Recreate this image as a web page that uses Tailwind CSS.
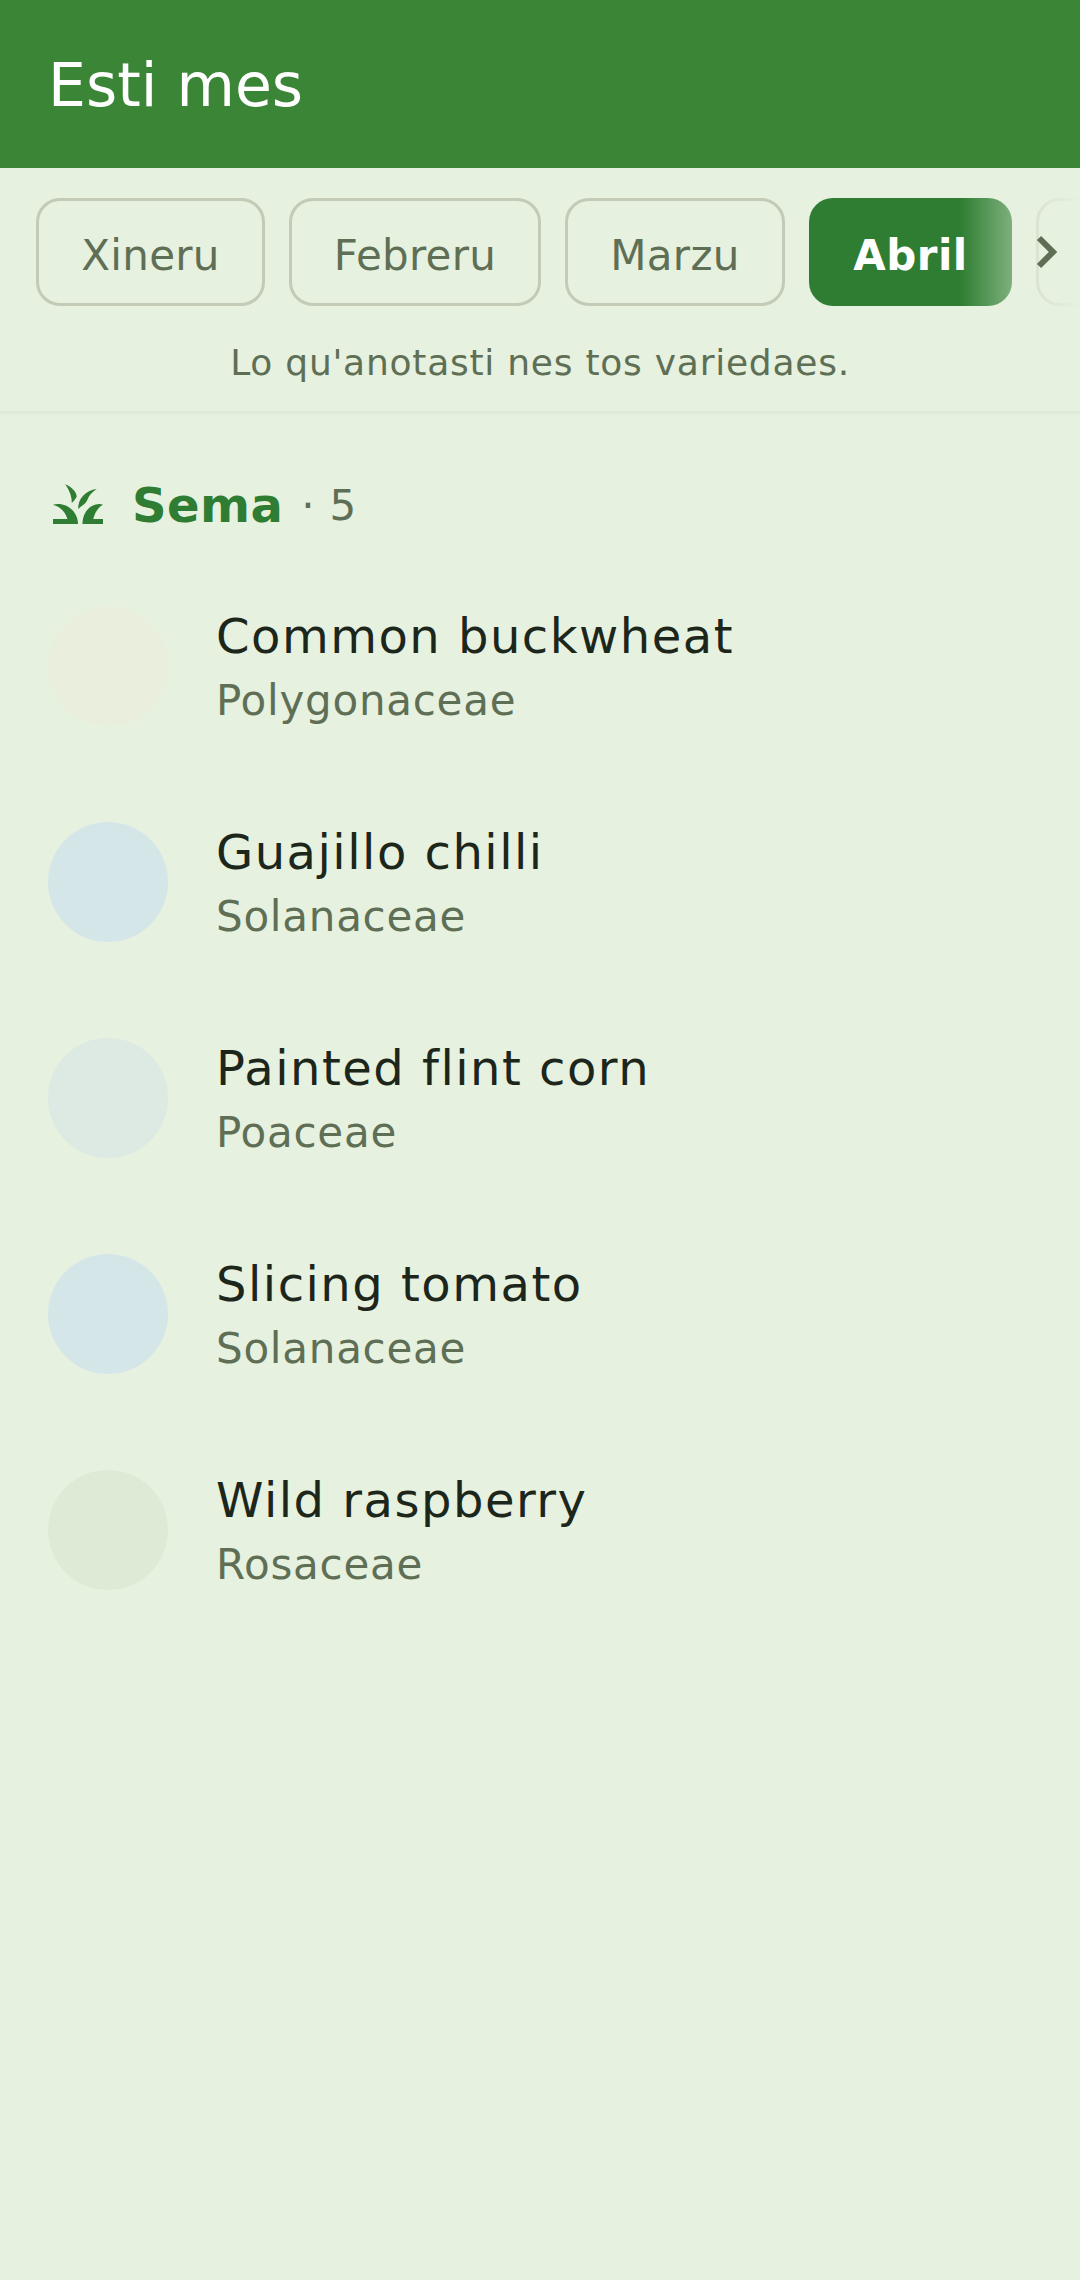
<!DOCTYPE html>
<html lang="ast">
<head>
  <meta charset="UTF-8">
  <meta name="viewport" content="width=device-width, initial-scale=1.0">
  <title>Esti mes</title>
  <script src="https://cdn.jsdelivr.net/npm/@tailwindcss/browser@4"></script>
</head>
<body class="bg-[#e6f1df] font-['DejaVu_Sans',sans-serif] w-[1080px] h-[2280px] overflow-hidden">
  <header class="bg-[#3b8636] h-[168px] flex items-center pl-12 pt-[2px]">
    <h1 class="text-white text-[60px] leading-none font-normal">Esti mes</h1>
  </header>

  <section class="relative">
    <div class="flex gap-[24px] pl-9 pt-[30px] overflow-hidden">
      <button class="shrink-0 w-[229px] h-[108px] pt-[7px] border-[3px] border-[#c3cab5] rounded-[24px] text-[42px] tracking-[0.3px] text-[#5f6f55]">Xineru</button>
      <button class="shrink-0 w-[252px] h-[108px] pt-[7px] border-[3px] border-[#c3cab5] rounded-[24px] text-[42px] tracking-[0.3px] text-[#5f6f55]">Febreru</button>
      <button class="shrink-0 w-[220px] h-[108px] pt-[7px] border-[3px] border-[#c3cab5] rounded-[24px] text-[42px] tracking-[0.3px] text-[#5f6f55]">Marzu</button>
      <button class="shrink-0 w-[203px] h-[108px] pt-[7px] bg-[#2e7d32] rounded-[24px] text-[42px] tracking-[0.45px] font-bold text-white">Abril</button>
      <button class="shrink-0 w-[200px] h-[108px] pt-[7px] pl-[48px] text-left border-[3px] border-[#c3cab5] rounded-[24px] text-[42px] tracking-[0.3px] text-[#5f6f55]">Mayu</button>
    </div>
    <div class="absolute right-0 top-[30px] w-[120px] h-[108px] bg-gradient-to-r from-[#e6f1df]/0 to-[#e6f1df]"></div>
    <svg class="absolute left-[1034px] top-[66px] w-6 h-9" viewBox="0 0 24 36" fill="none" stroke="#5f6f55" stroke-width="6">
      <path d="M5 4 L19 18 L5 32"/>
    </svg>
    <p class="text-center text-[36px] tracking-[0.75px] leading-none text-[#5f6f55] pt-[39px] pb-[30px] border-b-[3px] border-[#e0eada]">Lo qu'anotasti nes tos variedaes.</p>
  </section>

  <main class="pt-[60px]">
    <div class="flex items-center pl-[48px] h-[62px]">
      <svg class="w-[60px] h-[60px] mb-[2px]" viewBox="0 0 24 24" fill="#2e7d32">
        <path d="M12 20H2v-2h5.75C7 15.2 4.8 13 2 12.26 2.64 12.1 3.3 12 4 12c4.42 0 8 3.58 8 8z"/>
        <path d="M13.8 20H22v-2h-3.9C18.8 15.2 20 13.5 22 12.3 21.5 12.1 21 12 20.5 12 16.5 12.2 13.8 15.6 13.8 20z"/>
        <path d="M6.8 4.1C9.5 5 11.4 7.3 11.5 9 11 10 10.5 10.7 9.5 11.6 9.6 9 8.5 6.3 6.8 4.1z"/>
        <path d="M19.5 6C15 6.5 11.9 10 12.1 14 13.6 12.4 15.2 12 15.8 10.2 16.4 8.6 17.8 7 19.5 6z"/>
      </svg>
      <div class="flex items-baseline ml-[24px]">
        <span class="text-[48px] tracking-[0.45px] font-bold text-[#2e7d32] leading-none">Sema</span>
        <span class="ml-[18px] text-[42px] tracking-[0.75px] text-[#5f6f55] leading-none -translate-y-[2px]">· 5</span>
      </div>
    </div>

    <ul class="mt-[22px]">
      <li class="flex items-center pl-[48px] h-[216px]">
        <div class="w-[120px] h-[120px] rounded-full bg-[#e9efdc]"></div>
        <div class="ml-[48px]">
          <div class="text-[48px] tracking-[1.5px] leading-[70px] text-[#1c261a]">Common buckwheat</div>
          <div class="text-[42px] tracking-[0.75px] leading-[60px] text-[#5f6f55]">Polygonaceae</div>
        </div>
      </li>
      <li class="flex items-center pl-[48px] h-[216px]">
        <div class="w-[120px] h-[120px] rounded-full bg-[#d5e6e8]"></div>
        <div class="ml-[48px]">
          <div class="text-[48px] tracking-[1.5px] leading-[70px] text-[#1c261a]">Guajillo chilli</div>
          <div class="text-[42px] tracking-[0.75px] leading-[60px] text-[#5f6f55]">Solanaceae</div>
        </div>
      </li>
      <li class="flex items-center pl-[48px] h-[216px]">
        <div class="w-[120px] h-[120px] rounded-full bg-[#dde9e3]"></div>
        <div class="ml-[48px]">
          <div class="text-[48px] tracking-[1.5px] leading-[70px] text-[#1c261a]">Painted flint corn</div>
          <div class="text-[42px] tracking-[0.75px] leading-[60px] text-[#5f6f55]">Poaceae</div>
        </div>
      </li>
      <li class="flex items-center pl-[48px] h-[216px]">
        <div class="w-[120px] h-[120px] rounded-full bg-[#d5e6e8]"></div>
        <div class="ml-[48px]">
          <div class="text-[48px] tracking-[1.5px] leading-[70px] text-[#1c261a]">Slicing tomato</div>
          <div class="text-[42px] tracking-[0.75px] leading-[60px] text-[#5f6f55]">Solanaceae</div>
        </div>
      </li>
      <li class="flex items-center pl-[48px] h-[216px]">
        <div class="w-[120px] h-[120px] rounded-full bg-[#dfead6]"></div>
        <div class="ml-[48px]">
          <div class="text-[48px] tracking-[1.5px] leading-[70px] text-[#1c261a]">Wild raspberry</div>
          <div class="text-[42px] tracking-[0.75px] leading-[60px] text-[#5f6f55]">Rosaceae</div>
        </div>
      </li>
    </ul>
  </main>
</body>
</html>
